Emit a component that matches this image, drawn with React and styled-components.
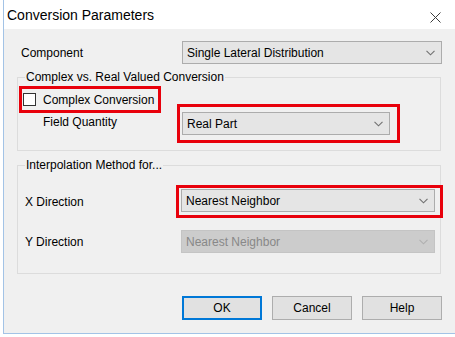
import React from "react";
import styled, { createGlobalStyle } from "styled-components";

const GlobalStyle = createGlobalStyle`
  html, body {
    margin: 0;
    padding: 0;
    background: #ffffff;
  }
  body {
    font-family: "Liberation Sans", Arial, sans-serif;
    font-size: 12px;
    color: #000000;
  }
  * {
    box-sizing: border-box;
  }
`;

function Chevron({ disabled }) {
  return (
    <svg width="9" height="6" viewBox="0 0 9 6">
      <path
        d="M0.5 0.8 L4.5 4.8 L8.5 0.8"
        fill="none"
        stroke={disabled ? "#b0b0b0" : "#707070"}
        strokeWidth="1.1"
      />
    </svg>
  );
}

function CloseIcon() {
  return (
    <svg width="11" height="11" viewBox="0 0 11 11">
      <path d="M0.5 0.5 L10.5 10.5 M10.5 0.5 L0.5 10.5" stroke="#3c3c3c" strokeWidth="1" />
    </svg>
  );
}

function Select({ value, width, disabled }) {
  return (
    <Combo $width={width} $disabled={disabled}>
      <span>{value}</span>
      <Chevron disabled={disabled} />
    </Combo>
  );
}

function App() {
  return (
    <>
      <GlobalStyle />
      <Window>
        <TitleBar>
          <Title>Conversion Parameters</Title>
          <CloseButton>
            <CloseIcon />
          </CloseButton>
        </TitleBar>
        <Body>
          <Row>
            <Label>Component</Label>
            <Select value="Single Lateral Distribution" width={260} />
          </Row>

          <Group $top={6} $bottom={7}>
            <Legend>Complex vs. Real Valued Conversion</Legend>
            <GroupInner>
              <LeftCol>
                <CheckHighlight>
                  <CheckBox />
                  <span>Complex Conversion</span>
                </CheckHighlight>
                <FieldLabel>Field Quantity</FieldLabel>
              </LeftCol>
              <Highlight $pad="5px 7px 5px 2px" $top={18}>
                <Select value="Real Part" width={208} />
              </Highlight>
            </GroupInner>
          </Group>

          <Group $top={7} $bottom={20}>
            <Legend>Interpolation Method for...</Legend>
            <DirRow $top={13}>
              <DirLabel $width={158}>X Direction</DirLabel>
              <Highlight $pad="1px 5px 3px 2px">
                <Select value="Nearest Neighbor" width={254} />
              </Highlight>
            </DirRow>
            <DirRow $top={12}>
              <DirLabel $width={163}>Y Direction</DirLabel>
              <Select value="Nearest Neighbor" width={254} disabled />
            </DirRow>
          </Group>

          <ButtonRow>
            <Button $default>OK</Button>
            <Button>Cancel</Button>
            <Button>Help</Button>
          </ButtonRow>
        </Body>
      </Window>
    </>
  );
}

const Window = styled.div`
  margin-left: 3px;
  width: 452px;
  height: 334px;
  border-left: 1px solid #a3c3e6;
  border-bottom: 1px solid #a3c3e6;
  display: flex;
  flex-direction: column;
`;

const TitleBar = styled.div`
  height: 29px;
  background: #ffffff;
  display: flex;
  align-items: center;
  justify-content: space-between;
  padding-left: 3px;
  padding-right: 14px;
`;

const Title = styled.div`
  font-size: 14px;
  color: #000000;
  line-height: 16px;
`;

const CloseButton = styled.div`
  display: flex;
  margin-top: 5px;
`;

const Body = styled.div`
  flex: 1;
  background: #f0f0f0;
  padding: 12px 0 0 13px;
`;

const Row = styled.div`
  display: grid;
  grid-template-columns: 165px auto;
  align-items: center;
  height: 23px;
`;

const Label = styled.div`
  padding-left: 4px;
  line-height: 14px;
`;

const Combo = styled.div`
  width: ${(p) => p.$width}px;
  height: 23px;
  flex-shrink: 0;
  display: flex;
  align-items: center;
  justify-content: space-between;
  padding: 0 6px 0 4px;
  border: 1px solid ${(p) => (p.$disabled ? "#c4c4c4" : "#acacac")};
  background: ${(p) => (p.$disabled ? "#cccccc" : "#e5e5e5")};
  color: ${(p) => (p.$disabled ? "#888888" : "#000000")};
  line-height: 14px;
`;

const Group = styled.fieldset`
  margin: ${(p) => p.$top}px 0 0 0;
  padding: 0 0 ${(p) => p.$bottom}px 0;
  width: 424px;
  min-width: 0;
  border: 1px solid #dcdcdc;
`;

const Legend = styled.legend`
  margin-left: 7px;
  padding: 0 1px;
  line-height: 14px;
  color: #000000;
`;

const GroupInner = styled.div`
  display: flex;
  align-items: flex-start;
  padding-top: 2px;
`;

const LeftCol = styled.div`
  width: 159px;
  flex-shrink: 0;
  display: flex;
  flex-direction: column;
`;

const CheckHighlight = styled.div`
  margin-left: 1px;
  width: 142px;
  height: 27px;
  border: 3px solid #e8000b;
  padding: 4px 0 4px 1px;
  display: flex;
  align-items: center;
  gap: 7px;
  line-height: 14px;
`;

const CheckBox = styled.div`
  width: 13px;
  height: 13px;
  border: 1px solid #333333;
  background: #ffffff;
  flex-shrink: 0;
`;

const FieldLabel = styled.div`
  margin-top: 2px;
  padding-left: 25px;
  line-height: 14px;
`;

const Highlight = styled.div`
  flex-shrink: 0;
  margin-top: ${(p) => p.$top || 0}px;
  border: 3px solid #e8000b;
  padding: ${(p) => p.$pad};
`;

const DirRow = styled.div`
  display: flex;
  align-items: center;
  margin-top: ${(p) => p.$top}px;
`;

const DirLabel = styled.div`
  width: ${(p) => p.$width}px;
  flex-shrink: 0;
  padding-left: 7px;
  line-height: 14px;
`;

const ButtonRow = styled.div`
  display: flex;
  gap: 10px;
  margin-top: 22px;
  padding-left: 165px;
`;

const Button = styled.div`
  width: 80px;
  height: 24px;
  display: flex;
  align-items: center;
  justify-content: center;
  background: #e1e1e1;
  border: ${(p) => (p.$default ? "2px solid #0078d7" : "1px solid #adadad")};
  line-height: 14px;
`;

export default App;
